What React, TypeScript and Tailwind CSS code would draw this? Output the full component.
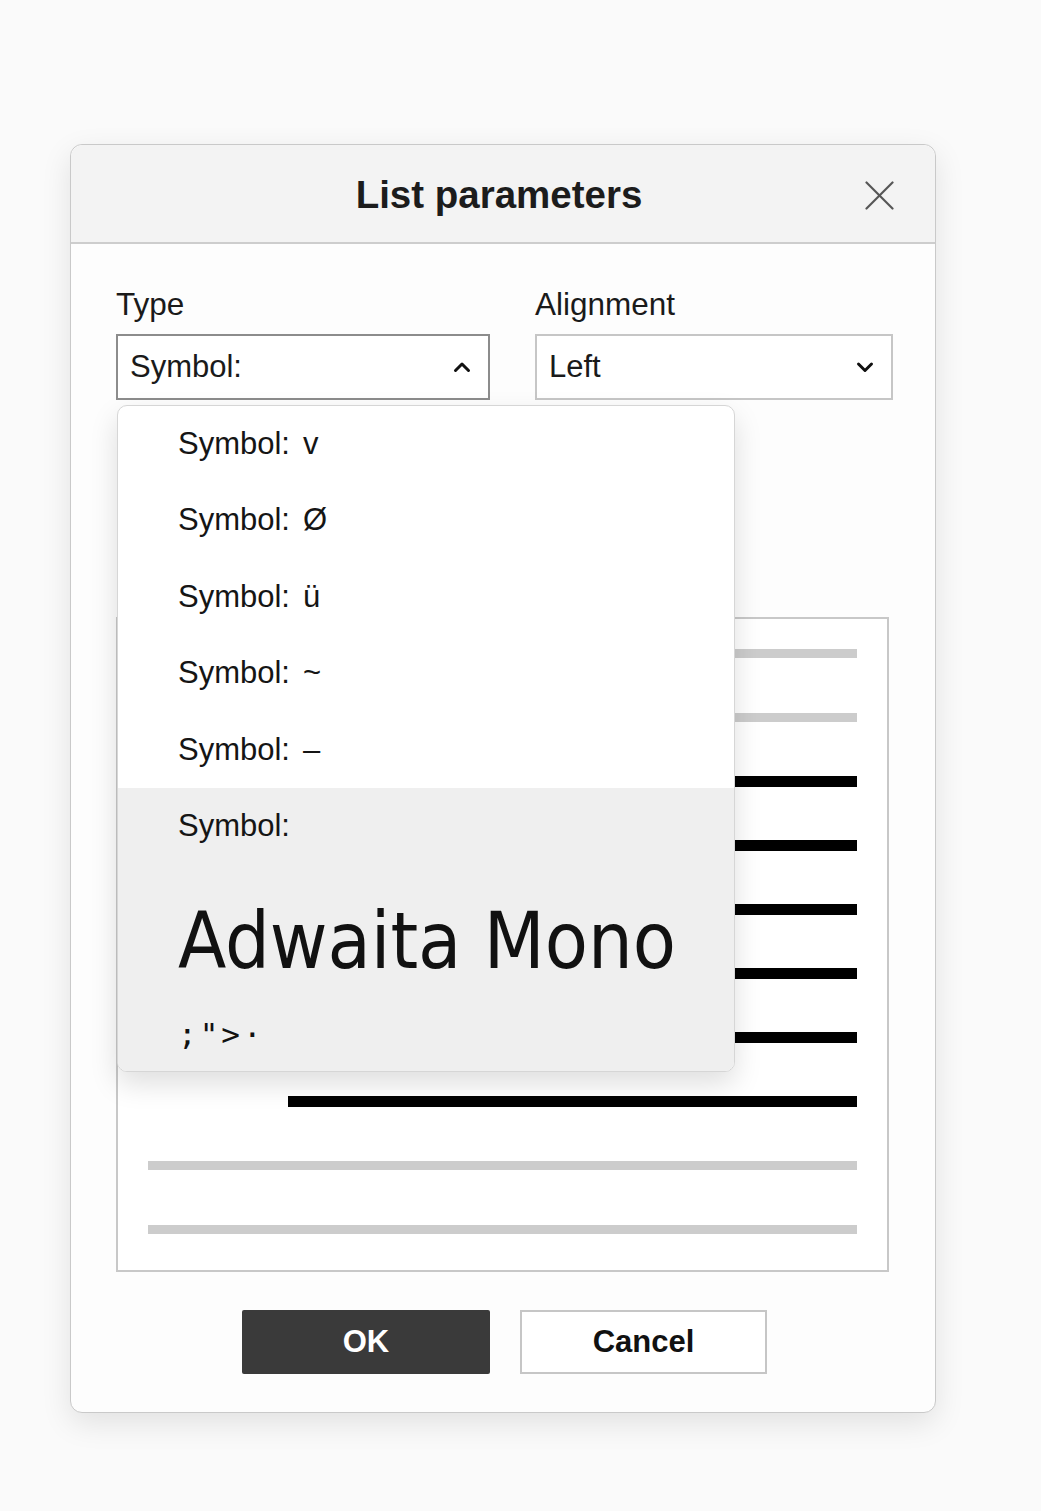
import { useState } from 'react';

type PreviewLine = { tone: 'muted' | 'strong'; indent: boolean };

const symbolOptions = ['v', 'Ø', 'ü', '~', '–'];

const previewLines: PreviewLine[] = [
  { tone: 'muted', indent: false },
  { tone: 'muted', indent: false },
  { tone: 'strong', indent: true },
  { tone: 'strong', indent: true },
  { tone: 'strong', indent: true },
  { tone: 'strong', indent: true },
  { tone: 'strong', indent: true },
  { tone: 'strong', indent: true },
  { tone: 'muted', indent: false },
  { tone: 'muted', indent: false },
];

function Chevron({ up }: { up?: boolean }) {
  return (
    <svg width="18" height="12" viewBox="0 0 18 12" fill="none" className="shrink-0">
      <polyline
        points={up ? '2.5,9.5 9,3 15.5,9.5' : '2.5,3 9,9.5 15.5,3'}
        stroke="#111"
        strokeWidth="3"
        strokeLinecap="round"
        strokeLinejoin="round"
      />
    </svg>
  );
}

export default function App() {
  const [typeOpen, setTypeOpen] = useState(true);
  const [symbol, setSymbol] = useState('');

  return (
    <div className="min-h-screen bg-[#fafafa] pt-[144px] pl-[70px] font-['Liberation_Sans',Arial,sans-serif] text-[#1a1a1a]">
      {/* Dialog */}
      <div className="relative w-[866px] rounded-[12px] border border-[#c9c9c9] bg-[#fdfdfd] shadow-[0_10px_30px_rgba(0,0,0,0.10)]">
        {/* Header */}
        <header className="relative flex h-[99px] items-center justify-center rounded-t-[12px] border-b-2 border-[#cdcdcd] bg-[#f3f3f3]">
          <h1 className="-ml-[8px] pt-[4px] text-[38.5px] font-bold leading-none text-[#1c1c1c]">List parameters</h1>
          <button className="absolute right-[41px] top-[36px] p-0">
            <svg width="29" height="29" viewBox="0 0 29 29" fill="none">
              <line x1="1.5" y1="1.5" x2="27.5" y2="27.5" stroke="#555" strokeWidth="2.2" strokeLinecap="round" />
              <line x1="27.5" y1="1.5" x2="1.5" y2="27.5" stroke="#555" strokeWidth="2.2" strokeLinecap="round" />
            </svg>
          </button>
        </header>

        {/* Body */}
        <div className="pl-[45px] pt-[42px] pb-[38px]">
          <div className="flex gap-[45px]">
            <div className="w-[374px]">
              <label className="block text-[31.5px] leading-[36px]">Type</label>
              <button
                onClick={() => setTypeOpen(!typeOpen)}
                className="mt-[12px] flex h-[66px] w-full items-center justify-between border-2 border-[#8c8c8c] bg-white pl-[12px] pr-[17px] text-left text-[31px]"
              >
                <span>Symbol:{symbol ? ' ' + symbol : ''}</span>
                <Chevron up={typeOpen} />
              </button>
            </div>
            <div className="w-[358px]">
              <label className="block text-[31.5px] leading-[36px]">Alignment</label>
              <button className="mt-[12px] flex h-[66px] w-full items-center justify-between border-2 border-[#c6c6c6] bg-white pl-[12px] pr-[17px] text-left text-[31px]">
                <span>Left</span>
                <Chevron />
              </button>
            </div>
          </div>

          {/* Preview */}
          <div className="mt-[217px] flex h-[655px] w-[773px] flex-col border-2 border-[#c8c8c8] bg-white px-[30px] pt-[2px]">
            {previewLines.map((line, i) => (
              <div key={i} className="flex h-[64px] shrink-0 items-center">
                <div
                  className={
                    line.tone === 'strong'
                      ? 'ml-[140px] h-[11px] flex-1 bg-black'
                      : 'h-[9px] flex-1 bg-[#cccccc]'
                  }
                />
              </div>
            ))}
          </div>

          {/* Actions */}
          <div className="mt-[38px] flex w-[777px] justify-center gap-[30px]">
            <button className="h-[64px] w-[248px] rounded-[2px] bg-[#3a3a3a] text-[31px] font-bold text-white">OK</button>
            <button className="h-[64px] w-[247px] border-2 border-[#c6c6c6] bg-white text-[31px] font-bold text-[#111]">
              Cancel
            </button>
          </div>
        </div>

        {/* Type dropdown menu */}
        {typeOpen && (
          <div className="absolute left-[46px] top-[260px] flex h-[667px] w-[618px] flex-col overflow-hidden rounded-[10px] border border-[#d6d6d6] bg-white shadow-[0_12px_28px_rgba(0,0,0,0.13)]">
            {symbolOptions.map((s) => (
              <button
                key={s}
                onClick={() => {
                  setSymbol(s);
                  setTypeOpen(false);
                }}
                className="flex h-[76.4px] shrink-0 items-center gap-[13px] pl-[60px] text-left text-[31px] text-[#151515]"
              >
                <span>Symbol:</span>
                <span>{s}</span>
              </button>
            ))}
            <div className="flex flex-1 flex-col bg-[#efefef] pl-[60px]">
              <div className="flex h-[76px] shrink-0 items-center text-[31px] text-[#151515]">Symbol:</div>
              <div className="mt-[38px] font-['DejaVu_Sans_Condensed','DejaVu_Sans',sans-serif] text-[78.5px] leading-[78px] font-stretch-condensed text-[#111]">
                Adwaita Mono
              </div>
              <div className="mt-[36px] font-['DejaVu_Sans_Mono',monospace] text-[31px] leading-[36px] tracking-[3px] text-[#111]">
                ;"&gt;·
              </div>
            </div>
          </div>
        )}
      </div>
    </div>
  );
}
